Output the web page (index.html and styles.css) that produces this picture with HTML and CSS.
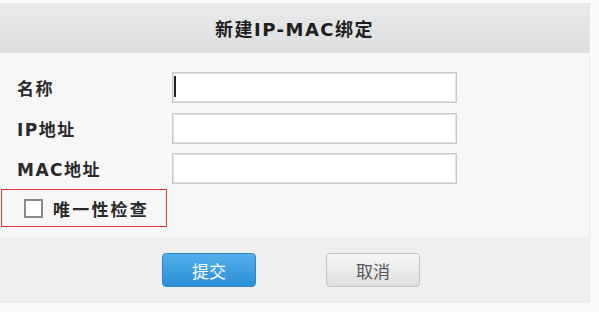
FILE: index.html
```html
<!DOCTYPE html>
<html lang="zh-CN">
<head>
<meta charset="utf-8">
<title>新建IP-MAC绑定</title>
<link rel="stylesheet" href="styles.css">
</head>
<body>
<div class="dialog">
  <div class="dialog-header">新建IP-MAC绑定</div>
  <div class="dialog-body">
    <div class="form-grid">
      <label class="field-label" for="f-name">名称</label>
      <div class="input-wrap">
        <input class="field-input" id="f-name" type="text">
        <span class="caret"></span>
      </div>
      <label class="field-label" for="f-ip">IP地址</label>
      <div class="input-wrap">
        <input class="field-input" id="f-ip" type="text">
      </div>
      <label class="field-label" for="f-mac">MAC地址</label>
      <div class="input-wrap">
        <input class="field-input" id="f-mac" type="text">
      </div>
    </div>
    <div class="check-row">
      <span class="check-box"></span>
      <span class="check-text">唯一性检查</span>
    </div>
  </div>
  <div class="dialog-footer">
    <button class="btn btn-primary" type="button">提交</button>
    <button class="btn btn-default" type="button">取消</button>
  </div>
</div>
</body>
</html>
```

FILE: styles.css
```css
html, body {
  margin: 0;
  padding: 0;
}
body {
  background: #fafafa;
  font-family: "DejaVu Sans", "Noto Sans CJK SC", sans-serif;
  width: 599px;
  height: 312px;
  overflow: hidden;
}
.dialog {
  margin-top: 3px;
  width: 590px;
  border-right: 1px solid #e8e8e8;
  box-sizing: border-box;
}
.dialog-header {
  height: 50px;
  display: flex;
  align-items: center;
  justify-content: center;
  background: linear-gradient(#eaebec, #dcdddf);
  color: #1e1e1e;
  font-size: 18px;
  font-weight: bold;
  letter-spacing: 1.5px;
}
.dialog-body {
  background: #f7f7f7;
  padding: 19px 0 10px 0;
}
.form-grid {
  display: grid;
  grid-template-columns: 155px 285px;
  grid-auto-rows: 31px;
  row-gap: 9.5px;
  padding-left: 17px;
  align-items: center;
}
.field-label {
  font-size: 17px;
  font-weight: bold;
  color: #2a2a2a;
  letter-spacing: 1.5px;
}
.input-wrap {
  position: relative;
  height: 31px;
}
.field-input {
  display: block;
  box-sizing: border-box;
  width: 285px;
  height: 31px;
  margin: 0;
  padding: 0 4px;
  border: 1px solid #c9c9c9;
  box-shadow: inset 0 0 0 1px #e2e2e2;
  background: #fff;
  outline: none;
}
.caret {
  position: absolute;
  left: 2px;
  top: 4px;
  width: 2px;
  height: 21px;
  background: #222;
}
.check-row {
  margin: 5px 0 0 1px;
  width: 166px;
  height: 38px;
  box-sizing: border-box;
  border: 1px solid #df3b3b;
  display: flex;
  align-items: center;
  padding-left: 22px;
}
.check-box {
  width: 19px;
  height: 19px;
  box-sizing: border-box;
  border: 2px solid #8a8a8a;
  background: #fff;
  margin-right: 10px;
}
.check-text {
  font-size: 17px;
  font-weight: bold;
  color: #2a2a2a;
  letter-spacing: 2.2px;
}
.dialog-footer {
  height: 66px;
  background: #efefef;
  display: flex;
  align-items: center;
  padding-left: 162px;
  gap: 70px;
}
.btn {
  width: 94px;
  height: 34px;
  box-sizing: border-box;
  border-radius: 4px;
  font-family: "DejaVu Sans", "Noto Sans CJK SC", sans-serif;
  font-size: 17px;
  padding: 0;
  margin: 0;
}
.btn-primary {
  background: linear-gradient(#52b0ea, #2a8fd7);
  border: 1px solid #2d86c8;
  color: #fff;
}
.btn-default {
  background: linear-gradient(#f7f7f7, #dedede);
  border: 1px solid #c2c2c2;
  color: #555;
}
```
